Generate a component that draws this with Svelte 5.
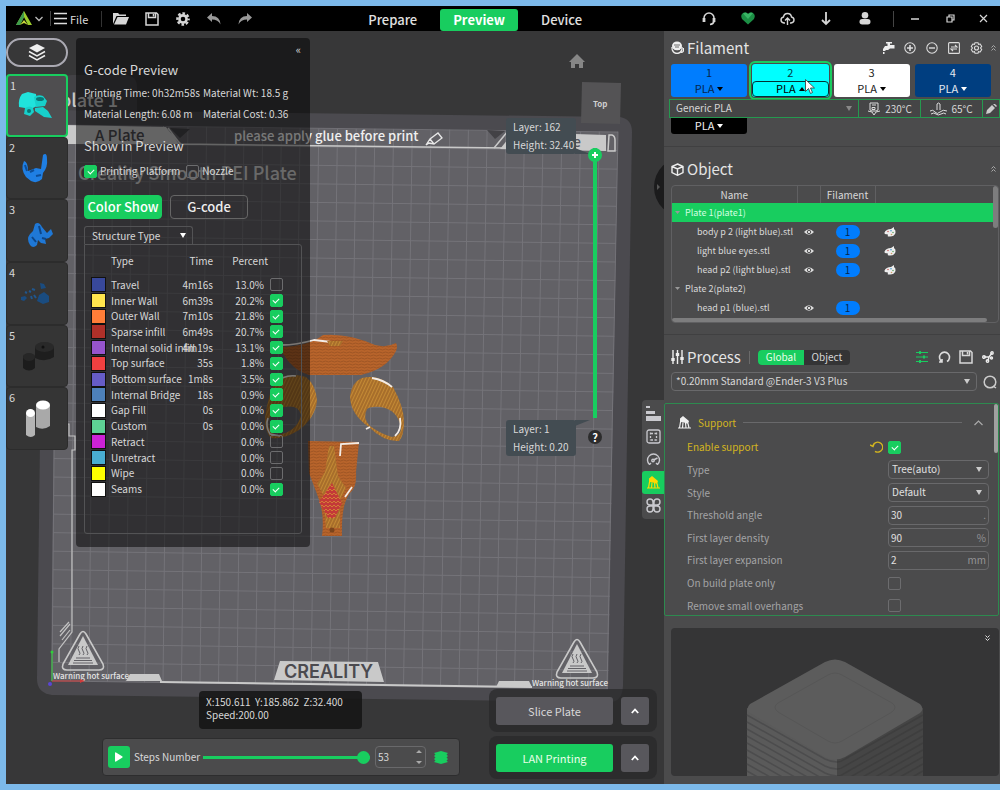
<script>
  const lines = Array.from({ length: 31 }, (_, i) => i)

  let plates = $state([1, 2, 3, 4, 5, 6])
  let selectedPlate = $state(1)

  let structure = $state([
    { name: "Travel", color: "#38489b", time: "4m16s", percent: "13.0%", on: false },
    { name: "Inner Wall", color: "#ffe54d", time: "6m39s", percent: "20.2%", on: true },
    { name: "Outer Wall", color: "#ff7d38", time: "7m10s", percent: "21.8%", on: true },
    { name: "Sparse infill", color: "#b03029", time: "6m49s", percent: "20.7%", on: true },
    { name: "Internal solid infill", color: "#9654cc", time: "4m19s", percent: "13.1%", on: true },
    { name: "Top surface", color: "#f04040", time: "35s", percent: "1.8%", on: true },
    { name: "Bottom surface", color: "#665cc7", time: "1m8s", percent: "3.5%", on: true },
    { name: "Internal Bridge", color: "#4d80ba", time: "18s", percent: "0.9%", on: true },
    { name: "Gap Fill", color: "#ffffff", time: "0s", percent: "0.0%", on: true },
    { name: "Custom", color: "#5ed194", time: "0s", percent: "0.0%", on: true },
    { name: "Retract", color: "#cd22d6", time: "", percent: "0.0%", on: false },
    { name: "Unretract", color: "#49add1", time: "", percent: "0.0%", on: false },
    { name: "Wipe", color: "#ffff00", time: "", percent: "0.0%", on: false },
    { name: "Seams", color: "#ffffff", time: "", percent: "0.0%", on: true },
  ])

  const filaments = [
    { id: 1, color: "#007dfe", text: "#06264d" },
    { id: 2, color: "#00ffff", text: "#063c44" },
    { id: 3, color: "#ffffff", text: "#222222" },
    { id: 4, color: "#003e80", text: "#e4e9f0" },
    { id: 5, color: "#000000", text: "#f0f0f0" },
  ]

  const objects = [
    { plate: "Plate 1(plate1)", selected: true },
    { name: "body p 2 (light blue).stl", painted: true },
    { name: "light blue eyes.stl", painted: true },
    { name: "head p2 (light blue).stl", painted: true },
    { plate: "Plate 2(plate2)" },
    { name: "head p1 (blue).stl" },
  ]

  let settings = $state([
    { id: "type", label: "Type", kind: "select", value: "Tree(auto)" },
    { id: "style", label: "Style", kind: "select", value: "Default" },
    { id: "angle", label: "Threshold angle", kind: "text", value: "30", unit: "." },
    { id: "density", label: "First layer density", kind: "text", value: "90", unit: "%" },
    { id: "expansion", label: "First layer expansion", kind: "text", value: "2", unit: "mm" },
    { id: "plateonly", label: "On build plate only", kind: "check", value: false },
    { id: "overhangs", label: "Remove small overhangs", kind: "check", value: false },
  ])

  let step = $state(53)
</script>

{#snippet supportIcon()}
  <svg width="13" height="13" viewBox="0 0 13 13">
    <path d="M2 2.500 5 0l6 5-1 3-4-1.500-4-.5z" fill="currentColor" />
    <path d="M2.500 6 1.500 12M5 6.500 4.500 12M7.500 7 8 12M10 7.500l1 4.500M0 12h13" fill="none" stroke="currentColor" stroke-width="1.200" />
  </svg>
{/snippet}

{#snippet saveIcon()}
  <svg width="14" height="14" viewBox="0 0 14 14" fill="none" stroke="currentColor" stroke-width="1.500">
    <path d="M1 1h10.500L13 2.500V13H1z" />
    <path d="M3.500 1v4.500h7V1" />
    <path d="M8.500 2v2.500" />
  </svg>
{/snippet}

{#snippet gearIcon()}
  <svg width="14" height="14" viewBox="0 0 14 14" fill="none" stroke="currentColor">
    <circle cx="7" cy="7" r="3.600" stroke-width="2.600" />
    <circle cx="7" cy="7" r="5.700" stroke-width="2.200" stroke-dasharray="2.600 1.880" stroke-dashoffset="1.300" />
  </svg>
{/snippet}

{#snippet warning(x, y)}
  <g transform="translate({x} {y})">
    <path d="M-3-17Q0-22 3-17L20 13Q22 19 16 19H-16Q-22 19-20 13Z" fill="none" stroke="#c9c9c9" stroke-width="1.600" />
    <path d="M0-15 15 14H-15Z" fill="#c9c9c9" />
    <path d="M-4-5q-2 2.500 0 5t0 4M0-5q-2 2.500 0 5t0 4M4-5q-2 2.500 0 5t0 4M-7 7H7M-9 9.500H9M-10 12H10" fill="none" stroke="#626166" />
  </g>
{/snippet}

<div class="app">
  <header class="topbar">
    <div class="tools">
      <button class="logo" aria-label="Creality menu">
        <svg width="16" height="15" viewBox="0 0 16 15">
          <path d="M8 0 0 14h4l4-8 4 8h4z" fill="#9ccb2c" />
          <path d="M8 0 0 14h4L8 6z" fill="#3f9c4d" />
          <path d="M4 14 8 9l4 5-4-2z" fill="#c7d93a" />
        </svg>
        <svg width="8" height="6" viewBox="0 0 8 6" fill="none" stroke="#bbb" stroke-width="1.300"><path d="m.5 1 3.500 3.500L7.500 1" /></svg>
      </button>
      <button class="file">
        <svg width="13" height="13" viewBox="0 0 13 13" stroke="#ddd" stroke-width="1.500"><path d="M0 1.500h13M0 6.500h13M0 11.500h13" /></svg>
        File
      </button>
      <button class="tool" aria-label="Open">
        <svg width="16" height="13" viewBox="0 0 16 13" fill="#d6d6d6"><path d="M0 12V1h5l1.500 1.500H13V4H3.500z" /><path d="M4.500 5H16l-3 7.500H1z" /></svg>
      </button>
      <button class="tool" aria-label="Save">{@render saveIcon()}</button>
      <button class="tool" aria-label="Settings">{@render gearIcon()}</button>
      <button class="tool dim" aria-label="Undo">
        <svg width="14" height="12" viewBox="0 0 14 12" fill="currentColor"><path d="M0 4.500 5 0v3q8 0 8.500 8.500Q11 6.500 5 6.500V9z" /></svg>
      </button>
      <button class="tool dim" aria-label="Redo">
        <svg width="14" height="12" viewBox="0 0 14 12" fill="currentColor"><path d="M14 4.500 9 0v3Q1 3 .5 11.500 3 6.500 9 6.500V9z" /></svg>
      </button>
    </div>

    <nav class="tabs">
      <button>Prepare</button>
      <button class="active">Preview</button>
      <button>Device</button>
    </nav>

    <div class="window-tools">
      <button aria-label="Support">
        <svg width="14" height="14" viewBox="0 0 14 14" fill="none" stroke="#d6d6d6" stroke-width="1.500"><path d="M2 8V6a5 5 0 0 1 10 0v2M12 9.500Q11.500 12 8 12.500" /><path d="M2 6v4M12 6v4" stroke-width="2.800" /></svg>
      </button>
      <button aria-label="Favourites">
        <svg width="14" height="13" viewBox="0 0 14 13"><path d="M7 12.500 1 7Q-1 3 2 1t5 1q2-3 5-1t1 6z" fill="#1c8f45" /><path d="M7 7 2 1.500Q5 0 7 2q3-2 5-1z" fill="#39b565" /></svg>
      </button>
      <button aria-label="Upload">
        <svg width="15" height="14" viewBox="0 0 15 14" fill="none" stroke="#d6d6d6" stroke-width="1.400"><path d="M5 11H4Q1 10.500 1 8t2.500-3Q4 1.500 7.500 1.500T11.500 5Q14 5.500 14 8t-3 3h-1M7.500 13V6M5 8.500 7.500 6 10 8.500" /></svg>
      </button>
      <button aria-label="Download">
        <svg width="10" height="14" viewBox="0 0 10 14" fill="none" stroke="#d6d6d6" stroke-width="1.800"><path d="M5 0v12M1 8l4 4 4-4" /></svg>
      </button>
      <button aria-label="Account">
        <svg width="12" height="13" viewBox="0 0 12 13" fill="#d6d6d6"><circle cx="6" cy="3.300" r="3.300" /><rect x=".5" y="7" width="11" height="5.500" rx="2.700" /></svg>
      </button>
      <span class="bar"></span>
      <button aria-label="Minimize"><svg width="8" height="2" viewBox="0 0 8 2"><path d="M0 1h8" stroke="#d6d6d6" stroke-width="1.500" /></svg></button>
      <button aria-label="Restore">
        <svg width="9" height="9" viewBox="0 0 9 9" fill="none" stroke="#d6d6d6" stroke-width="1.200"><path d="M1 3h5v5H1zM3 3V1h5v5H6" /></svg>
      </button>
      <button aria-label="Close"><svg width="9" height="9" viewBox="0 0 9 9"><path d="m1 1 7 7M8 1 1 8" stroke="#d6d6d6" stroke-width="1.200" /></svg></button>
    </div>
  </header>

  <main class="workspace">
    <section class="viewport">
      <svg class="scene" viewBox="6 31 658 753" preserveAspectRatio="xMinYMin slice">
        <defs>
          <pattern id="rings" width="6" height="3" patternUnits="userSpaceOnUse">
            <rect width="6" height="3" fill="#b8642b" />
            <path d="M0 1.500q1.500-1 3 0t3 0" fill="none" stroke="#985021" stroke-width=".8" />
          </pattern>
          <pattern id="gold" width="4" height="3" patternUnits="userSpaceOnUse" patternTransform="rotate(-65)">
            <rect width="4" height="3" fill="#c48a35" />
            <path d="M0 1h4" stroke="#8a5220" />
          </pattern>
          <pattern id="hot" width="4" height="4" patternUnits="userSpaceOnUse">
            <rect width="4" height="4" fill="#c43a38" />
            <path d="m0 3 2-2 2 2" fill="none" stroke="#d99a35" stroke-width=".7" />
          </pattern>
        </defs>

        <!-- build plate -->
        <path d="M62 110V84q0-9 10-9h54q11 1 11 12v24z" fill="#434246" />
        <path d="M60 110 620 117q12 2 12 15l-9 554q-1 16-13 16L52 695q-15-2-15-16l7-554q1-14 16-15z" fill="#4b4a4f" />
        <path d="m57 125 561 7-10 557-557-8z" fill="#626166" />
        <g stroke="#7d7c82" stroke-width="1" opacity=".7">
          {#each lines as i}
            <path d="M{57 + i * 18.7} {125 + i * 0.22}L{52 + i * 18.5} {681 + i * 0.27}" />
            <path d="M{57 - i * 0.17} {125 + i * 18.53}L{618 - i * 0.33} {132 + i * 18.57}" />
          {/each}
        </g>

        <path d="m64 125 102 2 13 17H64z" fill="#c9c9c9" />
        <path d="m168 128 13 17M163 127l18 17 326 4" fill="none" stroke="#c9c9c9" stroke-width="1.500" />
        <path d="m170 128 20 1-10 9zM487 130l18 1-10 8z" fill="#434246" />
        <path d="m500 149 14-17 92 3v16z" fill="#c9c9c9" />
        <path d="m494 148 14-17M609 135h3q3 1 3 5v11h-7z" fill="none" stroke="#c9c9c9" stroke-width="1.500" />
        <g class="plate-text">
          <text x="60" y="107" font-size="18" fill="#c9c9c9">plate 1</text>
          <text x="95" y="141" font-size="15" fill="#4b4a4f">A Plate</text>
          <text x="234" y="141" font-size="13" fill="#f0f0f0">please apply glue before print</text>
          <text x="573" y="147" font-size="14" fill="#55545a">e</text>
          <text x="78" y="180" font-size="18" fill="#d2d2d2">Creality Smooth PEI Plate</text>
          <text x="53" y="679" font-size="8" fill="#e4e4e4">Warning hot surface</text>
          <text x="532" y="686" font-size="8" fill="#e4e4e4">Warning hot surface</text>
        </g>
        <path d="m426 145 4-6 8-6 4 5-8 6-5-1zm4-6 4 5" fill="none" stroke="#e8e8e8" stroke-width="1.300" />

        <path d="M64 424h5v12h6v14h-3v182l-13 17v13M60 632l9-10M60 636l10-12M62 640l8-10" fill="none" stroke="#c2c2c2" stroke-width="1.200" />
        <path d="m126 681 4-7h29l3 7zM496 687l3-6h30l3 6zM274 680l6-19 98 1 6 20z" fill="#c9c9c9" />
        <path d="m160 681 372 5v2l-372-5z" fill="#c9c9c9" />
        <text class="brand" x="284" y="678">CREALITY</text>
        {@render warning(83, 651)}
        {@render warning(577, 659)}
        <path d="M52 681v-28" stroke="#2fd03a" /><circle cx="52" cy="652" r="1.500" fill="#2fd03a" />
        <path d="M52 681h32" stroke="#d03a3a" /><path d="m80 679 4 2-4 2z" fill="#d03a3a" />
        <circle cx="50" cy="684" r="2" fill="#5b45d6" />

        <!-- sliced parts -->
        <path d="M279 347q28 0 44-12 25-2 52 10 12 3 21-2 2 3 0 8-9 18-35 24h-52q-18-5-30-28z" fill="url(#rings)" />
        <path d="M282 345q14 0 32-5 9 1 17 2" fill="none" stroke="#f3ece6" stroke-width="1.800" />
        <path d="M327 341h16l-3 5h-10z" fill="url(#gold)" />
        <path fill-rule="evenodd" d="M277 379q14-7 29-2 10 8 11 24-2 17-18 29-16 10-28 8-6-6-6-20 3-25 12-39zm0 30q-9 7-9 14 1 10 9 12 20-3 24-20-3-13-24-6z" fill="url(#gold)" />
        <path d="M282 378q8-3 14-2M268 418q-3 8 2 16l10 2" fill="none" stroke="#eee" stroke-width="1.600" />
        <path fill-rule="evenodd" d="M362 378q17-4 31 9 11 20 11 35 0 14-5 19-15 1-30-14-19-13-19-31 2-14 12-18zm5 31q-5 9 3 17 11 8 22 11 9-1 9-9-3-18-20-21-10-1-14 2z" fill="url(#gold)" />
        <path d="M372 378q12 2 20 9M400 418q2 12-5 18M366 429l4-2" fill="none" stroke="#f3ece6" stroke-width="1.800" />
        <path d="m308 441 51 1-3 30q1 16-6 21-9 11-8 43h-20q3-23-5-42l-8-21z" fill="url(#rings)" />
        <path d="M329 446h5l4 30 8 12-6 12v28h-14l-3-34-6-10 8-12z" fill="url(#gold)" />
        <path d="m332 483 10 20-7 15h-7l-9-16z" fill="url(#hot)" />
        <circle cx="332" cy="530" r="2.500" fill="#7c451c" />
        <path d="m340 456 1-12 18-1M352 487l-7 10" fill="none" stroke="#f3ece6" stroke-width="1.800" />

        <!-- view cube -->
        <path d="m577 54 8 8h-2v6h-4v-4h-4v4h-4v-6h-2z" fill="#868686" />
        <path d="m582 82 39 1-1 41-39-1z" fill="#545355" />
        <text class="cube" x="593" y="107">Top</text>
        <circle cx="684" cy="187" r="30" fill="#1b1b1c" />
        <path d="m657 184 3 3-3 3z" fill="#555" />
      </svg>

      <div class="plates">
        <button class="all" aria-label="All plates">
          <svg width="18" height="17" viewBox="0 0 18 17"><path d="m9 0 8 4-8 4.500L1 4z" fill="#eee" /><path d="m1 7.500 8 4.500 8-4.500M1 11.500 9 16l8-4.500" fill="none" stroke="#eee" stroke-width="1.500" /></svg>
        </button>
        <div class="plate-list">
          {#each plates as plate}
            <button class="plate" class:selected={plate === selectedPlate} onclick={() => (selectedPlate = plate)}>
              <span>{plate}</span>
              <svg width="60" height="60" viewBox="0 0 60 60">
                {#if plate === 1}
                  <path d="m15 19 6-2 8 2 1 12-6 3-12-2q-1-8 3-13z" fill="#20e3dc" />
                  <path d="M27 22q4-3 9-1l4 5-2 5-9 1zM18 33q5-3 8 0l1 4-4 4-6-2zM28 33l8-1 5 4 4 7-8-1-9-6z" fill="#17d0cb" />
                  <ellipse cx="33" cy="24" rx="4" ry="2" fill="#0a7775" /><circle cx="22" cy="36" r="2" fill="#0a7775" />
                {:else if plate === 2}
                  <path d="M36 17q4-3 4 4 1 8-4 14l-1 6q-5 5-11 2l-5-4q-6-8-2-16 4 1 4 10l8-3 5 1z" fill="#1f7fe4" />
                  <path d="m23 34 4-2M29 38l5-1M18 27l2 6" stroke="#0c4d98" stroke-width="2" />
                {:else if plate === 3}
                  <path d="M28 23q4-3 7 3l5 6 4-4 2 5-4 4-4 1 1 5-5-1-3-3-1 5q-4 4-7 0-4-6 0-11l3-3z" fill="#1f78d6" />
                  <path d="m32 25 2 8M25 36l4 5M35 37l4 1" stroke="#0d4688" stroke-width="2" />
                {:else if plate === 4}
                  <path d="m33 20 4 1 2 4-5 1zM32 32l5-3 5 4v6l-6 2-6-3zM14 34l4-1 2 2-3 3-3-1z" fill="#1a4c80" />
                  <path d="m22 28 2 1m1-3 3 1m-1 5 2 3m-5-2 1 3m-7-7 2 1" stroke="#20568d" stroke-width="2" />
                {:else if plate === 5}
                  <path d="M28 21q9-6 19 0v10q-9 6-19 1z" fill="#1e1e1e" /><ellipse cx="37.500" cy="21" rx="9.500" ry="5" fill="#292929" />
                  <path d="M16 30q6-5 12 0v12q-6 5-12 0z" fill="#1c1c1c" /><ellipse cx="22" cy="31" rx="6" ry="4" fill="#272727" /><circle cx="36" cy="21" r="1.500" fill="#111" />
                {:else}
                  <path d="M29 16h14v21q-7 5-14 1z" fill="#a9a9a9" /><ellipse cx="36" cy="16" rx="7" ry="4.500" fill="#fff" />
                  <path d="M19 24h9v22q-4 4-9 0z" fill="#b4b4b4" /><ellipse cx="23.500" cy="24" rx="4.500" ry="4" fill="#fff" />
                {/if}
              </svg>
            </button>
          {/each}
        </div>
      </div>

      <div class="gcode">
        <button class="collapse" aria-label="Collapse">«</button>
        <h2>G-code Preview</h2>
        <div class="facts">
          <span>Printing Time: 0h32m58s</span><span>Material Wt: 18.5 g</span>
          <span>Material Length: 6.08 m</span><span>Material Cost: 0.36</span>
        </div>
        <h2>Show in Preview</h2>
        <div class="show">
          <label><input type="checkbox" checked />Printing Platform</label>
          <label><input type="checkbox" />Nozzle</label>
        </div>
        <div class="modes">
          <button class="active">Color Show</button>
          <button>G-code</button>
        </div>
        <div class="pick structure">
          <select aria-label="Color scheme"><option>Structure Type</option></select>
        </div>
        <div class="structure-box">
          <table>
            <colgroup><col class="c-swatch" /><col /><col class="c-time" /><col class="c-percent" /><col class="c-check" /></colgroup>
            <thead>
              <tr><th></th><th>Type</th><th class="num">Time</th><th class="num wide" colspan="2">Percent</th></tr>
            </thead>
            <tbody>
              {#each structure as row}
                <tr>
                  <td><div class="swatch" style="background: {row.color}"></div></td>
                  <td>{row.name}</td>
                  <td class="num">{row.time}</td>
                  <td class="num">{row.percent}</td>
                  <td class="tick"><input type="checkbox" bind:checked={row.on} aria-label={row.name} /></td>
                </tr>
              {/each}
            </tbody>
          </table>
        </div>
      </div>

      <div class="layer-tip top">Layer: 162<br />Height: 32.40</div>
      <div class="layer-tip bottom">Layer: 1<br />Height: 0.20</div>
      <input class="layers" type="range" min="1" max="162" value="162" aria-label="Layer" />
      <button class="help" aria-label="Help">?</button>

      <div class="side-tabs">
        <button aria-label="Quality"><svg width="15" height="15" viewBox="0 0 15 15" fill="#c9c9ce"><path d="M0 0h4v2H0zM0 5h9v3H0zM0 10h15v5H0z" /></svg></button>
        <button aria-label="Strength"><svg width="15" height="15" viewBox="0 0 15 15" fill="none" stroke="#c9c9ce" stroke-width="1.300"><rect x="1" y="1" width="13" height="13" rx="2" /><path d="M4.500 3.500v8M10.500 3.500v8M5 4.500h6M5 11h6" stroke-dasharray="2 1.500" /></svg></button>
        <button aria-label="Speed"><svg width="15" height="15" viewBox="0 0 15 15" fill="none" stroke="#c9c9ce" stroke-width="1.400"><path d="M3.500 12.500a6 6 0 1 1 8 0M3.500 12.500 5 11M11.500 12.500 10 11M7.500 8l4-2" /><circle cx="7" cy="8.500" r="1.200" /></svg></button>
        <button class="active" aria-label="Support">{@render supportIcon()}</button>
        <button aria-label="Others"><svg width="15" height="15" viewBox="0 0 15 15" fill="none" stroke="#c9c9ce" stroke-width="1.400"><path d="M7 7H4a3 3 0 1 1 3-3zM8 7V4a3 3 0 1 1 3 3zM7 8v3a3 3 0 1 1-3-3zM8 8h3a3 3 0 1 1-3 3z" /></svg></button>
      </div>

      <div class="position">X:150.611&nbsp; Y:185.862&nbsp; Z:32.400<br />Speed:200.00</div>

      <div class="steps">
        <button class="play" aria-label="Play"><svg width="8" height="10" viewBox="0 0 8 10"><path d="M0 1q0-1 1-.5l6.500 4v1L1 9.500Q0 10 0 9z" fill="#fff" /></svg></button>
        <label for="steps">Steps Number</label>
        <input id="steps" type="range" min="0" max="53" bind:value={step} />
        <div class="spin">
          <input type="text" value={step} aria-label="Step" />
          <svg width="6" height="14" viewBox="0 0 6 14" fill="#aaa"><path d="m0 3 3-3 3 3zM0 11h6l-3 3z" /></svg>
        </div>
        <svg width="14" height="13" viewBox="0 0 14 13" fill="#18cd5f"><path d="m7 0 7 2-1.500 1.500L14 5l-1.500 1.500L14 8l-1.500 1.500L14 11l-7 2-7-2 1.500-1.500L0 8l1.500-1.500L0 5l1.500-1.500L0 2z" /></svg>
      </div>

      <div class="actions">
        <div class="action">
          <button>Slice Plate</button>
          <button class="more" aria-label="Slice options"><svg width="8" height="6" viewBox="0 0 8 6"><path d="M.8 5 4 1.500 7.200 5" fill="none" stroke="#fff" stroke-width="1.800" /></svg></button>
        </div>
        <div class="action">
          <button class="go">LAN Printing</button>
          <button class="more" aria-label="Print options"><svg width="8" height="6" viewBox="0 0 8 6"><path d="M.8 5 4 1.500 7.200 5" fill="none" stroke="#fff" stroke-width="1.800" /></svg></button>
        </div>
      </div>
    </section>

    <aside class="sidebar">
      <section class="filament">
        <div class="head">
          <svg width="13" height="13" viewBox="0 0 13 13"><ellipse cx="6" cy="5" rx="5" ry="4.500" fill="#eee" /><path d="M1 6q0 6 5 6.500 5-.5 5-6.500M10 11q3 1 2.500-4" fill="none" stroke="#eee" stroke-width="1.400" /><path d="M3 4h6M4 6h4M1.500 8q5 4 9 0" fill="none" stroke="#4b4b4c" stroke-width=".8" /></svg>
          <h1>Filament</h1>
          <div class="head-tools">
            <button aria-label="Flush"><svg width="13" height="12" viewBox="0 0 13 12" fill="#eee"><path d="M4 0h6v1.500H8V3h4.500v3.500H8L6 8H3.500v1H1V7l2-3h2.500V1.500H4zM1 10h1.500v2H1z" /></svg></button>
            <button aria-label="Add"><svg width="12" height="12" viewBox="0 0 12 12" fill="none" stroke="#ddd" stroke-width="1.100"><circle cx="6" cy="6" r="5.200" /><path d="M3 6h6M6 3v6" stroke-width="1.600" /></svg></button>
            <button aria-label="Remove"><svg width="12" height="12" viewBox="0 0 12 12" fill="none" stroke="#ddd" stroke-width="1.100"><circle cx="6" cy="6" r="5.200" /><path d="M3 6h6" stroke-width="1.400" /></svg></button>
            <button aria-label="Sync"><svg width="12" height="12" viewBox="0 0 12 12" fill="none" stroke="#ddd" stroke-width="1.100"><rect x=".6" y=".6" width="10.800" height="10.800" rx="1" /><path d="M3 5h6L7 3M9 7H3l2 2" /></svg></button>
            <button aria-label="Filament settings"><svg width="13" height="12" viewBox="0 0 13 12" fill="none" stroke="#ddd" stroke-width="1.100"><path d="M5 .7h3l.5 1.600 1.700-.3 1.500 2.500L10.500 6l1.200 1.500-1.500 2.500-1.700-.3-.5 1.600H5l-.5-1.600-1.700.3-1.500-2.500L2.500 6 1.300 4.500 2.800 2l1.700.3z" /><circle cx="6.500" cy="6" r="2" /></svg></button>
          </div>
          <button class="fold" aria-label="Fold"><svg width="5" height="6" viewBox="0 0 5 6" fill="none" stroke="#aaa"><path d="M.5 2.500l2-2 2 2M.5 5.500l2-2 2 2" /></svg></button>
        </div>
        <div class="filaments">
          {#each filaments as filament}
            <button class="card" class:open={filament.id === 2} style="background: {filament.color}; color: {filament.text}">
              <span>{filament.id}</span>
              <span class="material">
                PLA
                <svg width="6" height="4" viewBox="0 0 6 4" fill={filament.id < 4 ? "#000" : "#fff"}><path d={filament.id === 2 ? "m0 4 3-4 3 4z" : "M0 0h6L3 4z"} /></svg>
              </span>
            </button>
          {/each}
          <div class="popup">
            <div class="pick preset"><select aria-label="Preset"><option>Generic PLA</option></select></div>
            <span>
              <svg width="14" height="14" viewBox="0 0 14 14" fill="none" stroke="#ddd"><path d="M3 1h8v7l-2 1H5L3 8zM1 9l4 1 2 3 2-3 4-1M5 3h4M5 5.500h3v2H5z" /></svg>
              230°C
            </span>
            <span>
              <svg width="17" height="14" viewBox="0 0 17 14" fill="none" stroke="#ddd"><path d="M7 8V2q1.500-2 3 0v6M0 9q3-2 5 1t5 0 7-1M1 12q3-2 5 0t5 0 5 0" /></svg>
              65°C
            </span>
            <button aria-label="Edit preset"><svg width="11" height="10" viewBox="0 0 11 10" fill="#ccc"><path d="m0 10 1-4 5-5 3 3-5 5zM7 0h2l2 2-1 1-3-3z" /></svg></button>
          </div>
          <svg class="cursor" width="10" height="15" viewBox="0 0 10 15"><path d="M.5.500v12l3-3 2 5 2-1-2-4.500h4z" fill="#fff" stroke="#333" stroke-width=".8" /></svg>
        </div>
      </section>

      <section class="object">
        <div class="head">
          <svg width="13" height="13" viewBox="0 0 13 13" fill="none" stroke="#eee" stroke-width="1.400"><path d="m6.500 1 5.500 2.500v6L6.500 12.300 1 9.500v-6zM1 3.500 6.500 6 12 3.500M6.500 6v6" /></svg>
          <h1>Object</h1>
          <button class="fold" aria-label="Fold"><svg width="5" height="6" viewBox="0 0 5 6" fill="none" stroke="#aaa"><path d="M.5 2.500l2-2 2 2M.5 5.500l2-2 2 2" /></svg></button>
        </div>
        <div class="object-box">
          <table>
            <colgroup><col class="o-name" /><col class="o-eye" /><col class="o-filament" /><col /></colgroup>
            <thead><tr><th>Name</th><th></th><th>Filament</th><th></th></tr></thead>
            <tbody>
              {#each objects as object}
                {#if object.plate}
                  <tr class:selected={object.selected}>
                    <td class="plate-name" colspan="4"><svg width="5" height="3" viewBox="0 0 5 3"><path d="M0 0h5L2.500 3z" fill="#999" /></svg>{object.plate}</td>
                  </tr>
                {:else}
                  <tr>
                    <td class="name">{object.name}</td>
                    <td class="eye"><svg width="10" height="6" viewBox="0 0 10 6"><path d="M0 3q5-5.500 10 0-5 5.500-10 0z" fill="#ddd" /><circle cx="5" cy="3" r="1.700" fill="none" stroke="#444" stroke-width=".9" /></svg></td>
                    <td class="slot"><span>1</span></td>
                    <td class="paint">
                      {#if object.painted}
                        <svg width="12" height="10" viewBox="0 0 12 10"><path d="M.5 5.500Q2 2 7 2l3-2v2q2 1 1.500 4Q10 10 5 9.500q-2 0-1-1.500 0-1-1.500-.8Q0 7.500.5 5.500z" fill="#eee" /><circle cx="4" cy="4.500" r=".8" fill="#c66" /><circle cx="7" cy="3.800" r=".8" fill="#49c" /><circle cx="9" cy="5.500" r=".8" fill="#6a6" /><circle cx="7.500" cy="7.500" r=".8" fill="#c96" /></svg>
                      {/if}
                    </td>
                  </tr>
                {/if}
              {/each}
            </tbody>
          </table>
          <i class="thumb-y"></i>
          <i class="thumb-x"></i>
        </div>
      </section>

      <section class="process">
        <div class="head">
          <svg width="13" height="14" viewBox="0 0 13 14" stroke="#eee" stroke-width="1.400"><path d="M2 0v14M6.500 0v14M11 0v14" /><path d="M2 8v3M6.500 3v3M11 7v3" stroke-width="3.400" /></svg>
          <h1>Process</h1>
          <span class="rule"></span>
          <div class="switch"><button class="active">Global</button><button>Object</button></div>
          <div class="head-tools">
            <button class="green" aria-label="Advanced"><svg width="12" height="12" viewBox="0 0 12 12" stroke="currentColor" stroke-width="1.200"><path d="M0 1.500h12M0 6h12M0 10.500h12" /><path d="M3 1.500h2M7 6h2M3 10.500h2" stroke-width="3" /></svg></button>
            <button aria-label="Reset"><svg width="13" height="12" viewBox="0 0 13 12" fill="none" stroke="#ddd" stroke-width="1.600"><path d="M4 10.500a5 5 0 1 1 5 0M4 8v3H1" /></svg></button>
            <button aria-label="Save preset">{@render saveIcon()}</button>
            <button aria-label="Compare"><svg width="12" height="12" viewBox="0 0 12 12" fill="none" stroke="#eee" stroke-width="1.400"><path d="M2 6h5l3-4M7 6l-1 4" /><circle cx="2" cy="6" r="1.300" /><circle cx="10" cy="2" r="1.200" /><circle cx="5.500" cy="10" r="1.200" /><circle cx="9.500" cy="7" r="1" /></svg></button>
          </div>
        </div>
        <div class="profile">
          <div class="pick box"><select aria-label="Profile"><option>*0.20mm Standard @Ender-3 V3 Plus</option></select></div>
          <button aria-label="Search"><svg width="14" height="14" viewBox="0 0 14 14" fill="none" stroke="#ccc" stroke-width="1.500"><circle cx="7" cy="7" r="5.800" /><path d="m10 11 3 2" /></svg></button>
        </div>

        <div class="settings">
          <div class="group">
            {@render supportIcon()}
            <h3>Support</h3>
            <hr />
            <svg width="9" height="6" viewBox="0 0 9 6" fill="none" stroke="#aaa" stroke-width="1.200"><path d="m.5 5 4-4 4 4" /></svg>
          </div>
          <div class="fields">
            <div class="field changed">
              <label for="enable">Enable support</label>
              <button aria-label="Revert"><svg width="13" height="12" viewBox="0 0 13 12" fill="none" stroke="currentColor" stroke-width="1.400"><path d="M3 4.500A5 5 0 1 1 5 10.300M0 4l3 1.500L4.500 2" /></svg></button>
              <div class="value"><input id="enable" type="checkbox" checked /></div>
            </div>
            {#each settings as setting}
              <div class="field">
                <label for={setting.id}>{setting.label}</label>
                <div class="value">
                  {#if setting.kind === "select"}
                    <div class="pick box"><select id={setting.id}><option>{setting.value}</option></select></div>
                  {:else if setting.kind === "text"}
                    <div class="text"><input id={setting.id} type="text" bind:value={setting.value} /><span>{setting.unit}</span></div>
                  {:else}
                    <input id={setting.id} type="checkbox" bind:checked={setting.value} />
                  {/if}
                </div>
              </div>
            {/each}
          </div>
          <i class="thumb-y"></i>
        </div>
      </section>

      <section class="picture">
        <button aria-label="Unfold"><svg width="5" height="6" viewBox="0 0 5 6" fill="none" stroke="#ddd"><path d="M.5.500l2 2 2-2M.5 3.500l2 2 2-2" /></svg></button>
        <svg class="stack" viewBox="0 0 328 148" preserveAspectRatio="xMidYMin slice">
          <path d="M76 80v68h90v-20z" fill="#5a5a5a" />
          <path d="M252 80v68h-86v-20z" fill="#454545" />
          {#each [8, 15, 22, 29, 36, 43, 50, 57, 64] as y}
            <path d="M76 {79 + y}l78 44q6 3 12 3" fill="none" stroke="#4c4c4d" stroke-width="1.500" />
            <path d="M252 {79 + y}l-78 44q-4 3-8 3" fill="none" stroke="#3e3e3e" stroke-width="1.500" />
          {/each}
          <path d="M154 34q10-5 20 0l75 42q5 5 0 9l-75 44q-10 5-20 0L79 85q-5-4 0-9z" fill="#5c5c5c" />
          <path d="M157 47q7-4 14 0l50 28q6 4 0 9l-50 29q-7 4-14 0l-50-29q-6-5 0-9z" fill="none" stroke="#565656" />
        </svg>
      </section>
    </aside>
  </main>
</div>

<style>
  :global(body) {
    margin: 0;
  }

  .app {
    display: flex;
    flex-direction: column;
    box-sizing: border-box;
    min-height: 100vh;
    padding: 6px 0 6px 6px;
    background: #7cb9ea;
    color: #d8d8d8;
    font-family: "Noto Sans CJK SC", "Noto Sans", sans-serif;
    font-size: 11px;
    line-height: 16px;
  }

  .app *,
  .app *::before,
  .app *::after {
    box-sizing: border-box;
  }

  button,
  input,
  select {
    margin: 0;
    padding: 0;
    border: 0;
    background: none;
    color: inherit;
    font: inherit;
  }

  button {
    display: flex;
    align-items: center;
    justify-content: center;
    cursor: pointer;
  }

  svg {
    display: block;
    flex: none;
  }

  h1,
  h2,
  h3 {
    margin: 0;
    font-weight: 400;
  }

  table {
    border-collapse: collapse;
    table-layout: fixed;
    width: 100%;
  }

  th,
  td {
    padding: 0;
    font-weight: 400;
    text-align: left;
    white-space: nowrap;
  }

  input[type="checkbox"] {
    appearance: none;
    display: block;
    flex: none;
    width: 13px;
    height: 13px;
    border: 1px solid #6c6c6e;
    border-radius: 2px;
  }

  input[type="checkbox"]:checked {
    border-color: #18cd5f;
    background: #18cd5f;
  }

  input[type="checkbox"]:checked::after {
    content: "";
    display: block;
    width: 6px;
    height: 4px;
    margin: 3px auto 0;
    border: solid #fff;
    border-width: 0 0 1px 1px;
    transform: rotate(-45deg);
  }

  .pick {
    position: relative;
    display: flex;
  }

  .pick select {
    appearance: none;
    flex: 1;
    min-width: 0;
    padding: 0 4px 1px;
    outline: 0;
  }

  /* drop-down arrow */
  .pick::after {
    content: "";
    position: absolute;
    right: 6px;
    top: calc(50% - 3px);
    border: 3px solid transparent;
    border-top: 5px solid #ccc;
    border-bottom: 0;
    pointer-events: none;
  }

  .box {
    border: 1px solid #69696b;
    border-radius: 4px;
  }

  /* top bar */
  .topbar {
    display: flex;
    justify-content: space-between;
    height: 25px;
    background: #000;
  }

  .tools,
  .tabs,
  .window-tools {
    display: flex;
    align-items: center;
  }

  .logo {
    gap: 3px;
    padding: 0 7px 0 10px;
    border-right: 1px solid #444;
  }

  .file {
    gap: 3px;
    margin-right: 3px;
    padding: 0 13px 0 3px;
    border-right: 1px solid #333;
    color: #ddd;
  }

  .tool {
    width: 31px;
    color: #d6d6d6;
  }

  .dim {
    color: #999;
  }

  .tabs {
    gap: 23px;
    color: #e0e0e0;
    font-size: 13px;
    font-weight: 500;
  }

  .tabs button {
    height: 22px;
    margin-top: 3px;
  }

  .tabs .active {
    padding: 0 13px;
    border-radius: 3px;
    background: #18cd5f;
    color: #fff;
    font-weight: 700;
  }

  .window-tools button {
    width: 39px;
  }

  .window-tools .bar {
    width: 1px;
    height: 16px;
    margin: 0 4px 0 8px;
    background: #444;
  }

  .window-tools .bar ~ button {
    width: 35px;
  }

  .window-tools .bar ~ button:last-child {
    width: 32px;
  }

  /* viewport */
  .workspace {
    display: flex;
    flex: 1;
  }

  .viewport {
    position: relative;
    flex: 1;
    min-width: 0;
    overflow: hidden;
    background: #373738;
  }

  .scene {
    position: absolute;
    inset: 0;
    width: 100%;
    height: 100%;
  }

  .plate-text {
    font-weight: 500;
  }

  .brand {
    fill: #4b4a4f;
    font-family: Inter, sans-serif;
    font-size: 18px;
    font-weight: 600;
  }

  .cube {
    fill: #d0d0d0;
    font-size: 8px;
    font-weight: 700;
  }

  .plates {
    position: absolute;
    top: 7px;
    left: 0;
    width: 62px;
  }

  .all {
    width: 100%;
    height: 29px;
    border: 2px solid #aaa9b2;
    border-radius: 15px;
    background: #373738;
  }

  .plate-list {
    display: grid;
    grid-template-rows: repeat(6, 1fr);
    height: 376px;
    margin-top: 7px;
  }

  .plate {
    position: relative;
    min-height: 0;
    border: 1px solid #2c2c2c;
    border-radius: 4px;
    background: #353535;
    overflow: hidden;
  }

  .plate span {
    position: absolute;
    top: 1px;
    left: 2px;
  }

  .plate.selected {
    border: 2px solid #18cd5f;
    background: #4f4e50;
  }

  .gcode {
    position: absolute;
    top: 7px;
    left: 70px;
    width: 234px;
    height: 509px;
    padding: 23px 8px 12px;
    border-radius: 4px;
    background: rgba(0, 0, 0, 0.5);
  }

  .collapse {
    position: absolute;
    top: 3px;
    right: 9px;
  }

  .gcode h2 {
    font-size: 13px;
    line-height: 18px;
  }

  .facts {
    display: grid;
    grid-template-columns: 119px 1fr;
    row-gap: 5px;
    margin: 6px 0 15px;
    font-size: 10px;
    white-space: nowrap;
  }

  .show {
    display: flex;
    gap: 6px;
    margin: 8px 0 16px;
    font-size: 10px;
  }

  .show label {
    display: flex;
    align-items: center;
    gap: 3px;
  }

  .modes {
    display: flex;
    gap: 8px;
    margin-bottom: 7px;
    font-size: 13px;
    font-weight: 500;
  }

  .modes button {
    width: 78px;
    height: 24px;
    padding-bottom: 1px;
    border: 1px solid #666;
    border-radius: 4px;
    color: #eee;
  }

  .modes .active {
    border-color: #18cd5f;
    background: #18cd5f;
    color: #fff;
  }

  .structure {
    width: 109px;
    height: 18px;
    border: 1px solid #535355;
    border-bottom: 0;
    border-radius: 3px 3px 0 0;
  }

  .structure select {
    padding: 0 7px;
    font-size: 10px;
  }

  .structure::after {
    border-top-color: #fff;
  }

  .structure-box {
    height: 290px;
    padding: 0 18px 0 6px;
    border: 1px solid #535355;
    border-radius: 0 3px 3px 3px;
    font-size: 10px;
    line-height: 14px;
  }

  .structure-box table {
    height: 252px;
  }

  .structure-box th {
    height: 32px;
  }

  .structure-box .num {
    text-align: right;
  }

  .structure-box .wide {
    padding-right: 15px;
  }

  .c-swatch {
    width: 20px;
  }

  .c-time {
    width: 48px;
  }

  .c-percent {
    width: 51px;
  }

  .c-check {
    width: 19px;
  }

  .swatch {
    width: 15px;
    height: 15px;
    border: 1px solid #111;
  }

  .tick input {
    margin-left: 6px;
  }

  .layer-tip {
    position: absolute;
    left: 500px;
    width: 70px;
    padding: 0 7px;
    border-radius: 3px;
    background: #434c52;
    font-size: 10px;
    line-height: 18px;
    white-space: nowrap;
  }

  .layer-tip::after {
    content: "";
    position: absolute;
    left: 69px;
    width: 15px;
    height: 6px;
    background: #434c52;
  }

  .layer-tip.top {
    top: 87px;
  }

  .layer-tip.top::after {
    bottom: 0;
    clip-path: polygon(0 0, 100% 100%, 0 100%);
  }

  .layer-tip.bottom {
    top: 389px;
  }

  .layer-tip.bottom::after {
    top: 0;
    clip-path: polygon(0 0, 100% 0, 0 100%);
  }

  input[type="range"] {
    appearance: none;
  }

  .layers {
    position: absolute;
    top: 117px;
    left: 582px;
    width: 14px;
    height: 270px;
    writing-mode: vertical-lr;
    direction: rtl;
    background: linear-gradient(#18cd5f, #18cd5f) center / 4px 100% no-repeat;
  }

  .layers::-webkit-slider-thumb {
    appearance: none;
    width: 14px;
    height: 14px;
    border-radius: 50%;
    background:
      linear-gradient(#fff, #fff) center / 6px 2px no-repeat,
      linear-gradient(#fff, #fff) center / 2px 6px no-repeat,
      #18cd5f;
  }

  .help {
    position: absolute;
    top: 399px;
    left: 582px;
    width: 14px;
    height: 14px;
    border-radius: 50%;
    background: #2c2c2d;
    color: #fff;
    font-weight: 700;
  }

  .side-tabs {
    position: absolute;
    top: 369px;
    right: 0;
    display: flex;
    flex-direction: column;
    width: 22px;
    padding: 2px 0;
    border-radius: 4px 0 0 4px;
    background: #4b4b4c;
  }

  .side-tabs button {
    height: 23px;
  }

  .side-tabs .active {
    border-radius: 3px 0 0 3px;
    background: #18cd5f;
    color: #ffd800;
  }

  .position {
    position: absolute;
    left: 193px;
    bottom: 55px;
    width: 163px;
    height: 38px;
    padding: 4px 7px;
    border-radius: 4px;
    background: rgba(20, 20, 20, 0.85);
    font-size: 10px;
    line-height: 13px;
    white-space: nowrap;
  }

  .steps {
    position: absolute;
    left: 96px;
    bottom: 8px;
    display: flex;
    align-items: center;
    width: 358px;
    height: 38px;
    padding: 0 11px 0 5px;
    border: 1px solid #2d2d2e;
    border-radius: 4px;
    background: #4b4b4c;
  }

  .play {
    width: 22px;
    height: 22px;
    border-radius: 3px;
    background: #18cd5f;
  }

  .steps label {
    margin: 0 3px 0 4px;
    font-size: 10px;
    white-space: nowrap;
  }

  .steps input[type="range"] {
    flex: 1;
    min-width: 0;
    height: 14px;
    background: linear-gradient(#18cd5f, #18cd5f) center / 100% 3px no-repeat;
  }

  .steps input[type="range"]::-webkit-slider-thumb {
    appearance: none;
    width: 13px;
    height: 13px;
    border-radius: 50%;
    background: #18cd5f;
  }

  .spin {
    display: flex;
    align-items: center;
    width: 51px;
    height: 22px;
    margin: 0 8px 0 5px;
    padding: 0 3px 0 2px;
    border: 1px solid #69696b;
    border-radius: 4px;
    font-size: 10px;
  }

  .spin input {
    flex: 1;
    min-width: 0;
  }

  .actions {
    position: absolute;
    right: 7px;
    bottom: 5px;
    display: grid;
    gap: 4px;
  }

  .action {
    display: flex;
    gap: 8px;
    padding: 8px 8px 7px 7px;
    border-radius: 8px;
    background: rgba(40, 40, 41, 0.7);
  }

  .action button {
    width: 117px;
    height: 28px;
    border-radius: 3px;
    background: #58575c;
  }

  .action .go {
    background: #18cd5f;
    color: #e9ffe9;
  }

  .action .more {
    width: 28px;
  }

  /* sidebar */
  .sidebar {
    display: flex;
    flex-direction: column;
    width: 336px;
    padding-bottom: 8px;
    background: #4b4b4c;
  }

  .filament,
  .object,
  .process {
    padding: 0 1px 0 7px;
  }

  .filament {
    padding-bottom: 12px;
    border-bottom: 1px solid #404041;
  }

  .object {
    padding-top: 6px;
    padding-bottom: 11px;
    border-bottom: 1px solid #404041;
  }

  .process {
    padding-top: 7px;
  }

  .head {
    display: flex;
    align-items: center;
    gap: 3px;
    height: 33px;
  }

  .object .head {
    height: 32px;
  }

  .process .head {
    height: 30px;
  }

  h1 {
    color: #e4e4e4;
    font-size: 15px;
    line-height: 20px;
  }

  .head-tools {
    display: flex;
    margin-left: auto;
  }

  .head-tools button {
    width: 22px;
  }

  .green {
    color: #18cd5f;
  }

  .fold {
    width: 6px;
    margin-right: 3px;
    margin-left: auto;
  }

  .head-tools + .fold {
    margin-left: 0;
  }

  .filaments {
    position: relative;
    display: grid;
    grid-template-columns: repeat(4, 1fr);
    gap: 4px 5px;
    margin-right: 8px;
  }

  .card {
    flex-direction: column;
    height: 33px;
    border-radius: 3px;
    line-height: 15px;
  }

  .card span {
    height: 16px;
  }

  .card.open {
    outline: 2px solid #18cd5f;
    outline-offset: 1px;
  }

  .material {
    display: flex;
    align-items: center;
    justify-content: center;
    gap: 3px;
    width: 100%;
  }

  .card.open .material {
    border: 1px solid #033;
    border-radius: 4px;
    color: #000;
  }

  .popup {
    position: absolute;
    top: 35px;
    left: -2px;
    right: -9px;
    display: flex;
    height: 19px;
    border: 1px solid #25994f;
    background: #454546;
  }

  .preset {
    flex: 1;
  }

  .preset select {
    padding: 0 6px 1px;
    font-size: 10px;
  }

  .preset::after {
    border-top-color: #888;
  }

  .popup span,
  .popup button {
    display: flex;
    align-items: center;
    justify-content: center;
    gap: 4px;
    width: 62px;
    border-left: 1px solid #25994f;
    font-size: 10px;
  }

  .popup button {
    width: 17px;
  }

  .cursor {
    position: absolute;
    top: 15px;
    left: 134px;
  }

  .object-box {
    position: relative;
    height: 138px;
    border: 1px solid #606062;
    border-radius: 4px;
    overflow: hidden;
    font-size: 9px;
  }

  .object-box table {
    height: 131px;
  }

  .object-box th {
    height: 17px;
    border-right: 1px solid #606062;
    font-size: 10px;
    line-height: 15px;
    text-align: center;
  }

  .object-box th:last-child {
    border-right: 0;
  }

  .o-name {
    width: 125px;
  }

  .o-eye {
    width: 23px;
  }

  .o-filament {
    width: 55px;
  }

  tr.selected {
    background: #18cd5f;
    color: #d3ffe0;
  }

  .plate-name svg {
    display: inline-block;
    margin: 0 5px 2px 3px;
  }

  .object-box .name {
    padding-left: 25px;
  }

  .eye svg {
    margin: auto;
  }

  .slot span {
    display: block;
    width: 24px;
    height: 14px;
    margin: auto;
    border-radius: 7px;
    background: #007dfe;
    color: #06264d;
    font-size: 10px;
    line-height: 14px;
    text-align: center;
  }

  .paint svg {
    margin-left: 9px;
  }

  .thumb-x,
  .thumb-y {
    position: absolute;
    border-radius: 3px;
    background: #7d7d7e;
  }

  .thumb-y {
    top: 0;
    right: 0;
    width: 5px;
    height: 42px;
  }

  .thumb-x {
    bottom: 0;
    left: 0;
    right: 11px;
    height: 4px;
  }

  .rule {
    width: 1px;
    height: 13px;
    margin: 0 5px;
    background: #6a6a6a;
  }

  .switch {
    display: flex;
    border-radius: 4px;
    overflow: hidden;
    background: #343435;
    font-size: 10px;
  }

  .switch button {
    width: 46px;
    height: 15px;
    padding-bottom: 1px;
  }

  .switch .active {
    background: #18cd5f;
    color: #e9ffe9;
  }

  .profile {
    display: flex;
    align-items: center;
    gap: 6px;
    margin-bottom: 12px;
    padding-right: 2px;
    font-size: 10px;
  }

  .profile .pick {
    flex: 1;
    height: 19px;
  }

  .settings {
    position: relative;
    height: 213px;
    margin-left: -7px;
    border: 1px solid #2d8a4f;
    border-radius: 2px;
    overflow: hidden;
    font-size: 10px;
  }

  .settings .thumb-y {
    width: 4px;
    height: 49px;
    background: #a0a0a0;
  }

  .group {
    display: flex;
    align-items: center;
    gap: 7px;
    height: 32px;
    padding: 5px 15px 0 13px;
    color: #eee;
  }

  h3 {
    color: #d3b51f;
    font-size: 10px;
  }

  .group hr {
    flex: 1;
    margin: 0 5px 0 0;
    border: 0;
    border-top: 1px solid #69696b;
  }

  .fields {
    display: grid;
    grid-template-rows: repeat(8, 1fr);
    height: 181px;
    padding: 0 9px 0 22px;
  }

  .field {
    display: flex;
    align-items: center;
    min-height: 0;
    color: #a4a4a6;
  }

  .field label {
    flex: 1;
  }

  .field button {
    margin-right: 5px;
  }

  .changed {
    color: #d3b51f;
  }

  .value {
    width: 101px;
    color: #e0e0e0;
  }

  .value .pick,
  .text {
    display: flex;
    height: 19px;
  }

  .value select {
    padding: 0 3px 1px;
  }

  .text {
    align-items: center;
    padding: 0 2px;
    border: 1px solid #69696b;
    border-radius: 4px;
  }

  .text input {
    flex: 1;
    min-width: 0;
  }

  .text span {
    color: #949496;
  }

  .picture {
    position: relative;
    flex: 1;
    min-height: 148px;
    margin: 12px 1px 0 7px;
    border-radius: 4px;
    background: #353536;
    overflow: hidden;
  }

  .picture button {
    position: absolute;
    top: 7px;
    right: 9px;
  }

  .stack {
    width: 100%;
    height: 148px;
  }
</style>
